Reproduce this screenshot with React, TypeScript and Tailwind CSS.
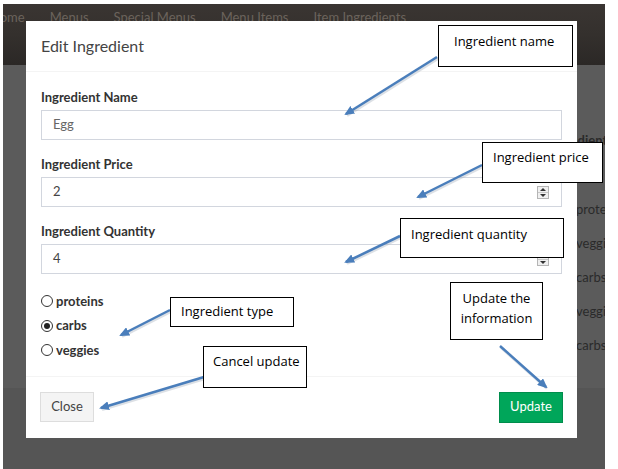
import React from "react";

type Callout = {
  text: string[];
  left: number;
  top: number;
  width: number;
  height: number;
  pl: string;
  pt: string;
  center?: boolean;
};

const callouts: Callout[] = [
  { text: ["Ingredient name"], left: 438, top: 25, width: 135, height: 42, pl: "pl-[15px]", pt: "pt-[5px]" },
  { text: ["Ingredient price"], left: 482, top: 142, width: 121, height: 41, pl: "pl-[10px]", pt: "pt-[4px]" },
  { text: ["Ingredient quantity"], left: 400, top: 218, width: 164, height: 40, pl: "pl-[10px]", pt: "pt-[5px]" },
  { text: ["Update the", "information"], left: 450, top: 282, width: 93, height: 58, pl: "pl-0", pt: "pt-[5px]", center: true },
  { text: ["Ingredient type"], left: 170, top: 297, width: 124, height: 30, pl: "pl-[10px]", pt: "pt-[3px]" },
  { text: ["Cancel update"], left: 203, top: 346, width: 104, height: 42, pl: "pl-[9px]", pt: "pt-[4px]" },
];

const arrows = [
  { x1: 437, y1: 57, x2: 346, y2: 114 },
  { x1: 482, y1: 165, x2: 418, y2: 197 },
  { x1: 400, y1: 236, x2: 346, y2: 262 },
  { x1: 170, y1: 310, x2: 121, y2: 335 },
  { x1: 204, y1: 377, x2: 101, y2: 408 },
  { x1: 500, y1: 346, x2: 546, y2: 387 },
];

const navItems = ["Home", "Menus", "Special Menus", "Menu Items", "Item Ingredients"];
const tableRows = ["proteins", "veggies", "carbs", "veggies", "carbs"];

function Spinner() {
  return (
    <div className="flex flex-col w-[12px] h-[13px] border border-[#b5b5b5] bg-[#f0f0f0]">
      <div className="flex-1 flex items-center justify-center border-b border-[#c8c8c8]">
        <div className="w-0 h-0 border-l-[3px] border-r-[3px] border-b-[3px] border-l-transparent border-r-transparent border-b-[#333]" />
      </div>
      <div className="flex-1 flex items-center justify-center">
        <div className="w-0 h-0 border-l-[3px] border-r-[3px] border-t-[3px] border-l-transparent border-r-transparent border-t-[#333]" />
      </div>
    </div>
  );
}

function Field({ label, value, spinner, muted }: { label: string; value: string; spinner?: boolean; muted?: boolean }) {
  return (
    <div className="mb-[15px]">
      <div className="h-[18px] leading-[18px] text-[13px] font-bold text-[#333] mb-[4px]">{label}</div>
      <div className="h-[30px] border border-[#d2d6de] flex items-center pl-[11px] pr-[12px]">
        <span className={`flex-1 text-[13px] ${muted ? "text-[#666]" : "text-[#444]"}`}>{value}</span>
        {spinner && <Spinner />}
      </div>
    </div>
  );
}

function Radio({ label, checked }: { label: string; checked?: boolean }) {
  return (
    <div className="h-[24.5px] flex items-center gap-[3px]">
      <div className="w-[12px] h-[12px] rounded-full border border-[#333] bg-white flex items-center justify-center">
        {checked && <div className="w-[6px] h-[6px] rounded-full bg-[#222]" />}
      </div>
      <span className="text-[13px] font-bold text-[#333]">{label}</span>
    </div>
  );
}

export default function App() {
  return (
    <div className="relative w-[618px] h-[469px] bg-white pt-[4px] pl-[3px] pr-[13px] overflow-hidden font-['Lato',sans-serif]">
      {/* page behind the overlay */}
      <div className="h-full flex flex-col bg-[#555] overflow-hidden">
        <div className="h-[61px] bg-[linear-gradient(180deg,#3a3532_0%,#34302d_50%,#2b2826_100%)]">
          <div className="flex gap-[25px] h-[28px] items-center -ml-[13px] text-[13px] text-[#6b635c]">
            {navItems.map((n) => (
              <span key={n}>{n}</span>
            ))}
          </div>
        </div>
        <div className="h-[323px] bg-[#5b5b5b] pl-[545px] pt-[66px] text-[13px] text-[#2a2a2a] whitespace-nowrap">
          <div className="h-[18px] leading-[18px] font-bold">Ingredients</div>
          <div className="mt-[43px] w-[100px] pl-[24px]">
            {tableRows.map((r, i) => (
              <div key={i} className="h-[34px] leading-[34px] pl-[4px]">
                {r}
              </div>
            ))}
          </div>
        </div>
        <div className="flex-1 bg-[#555]" />
      </div>

      {/* modal */}
      <div className="absolute left-[26px] top-[21px] w-[551px] bg-white">
        <div className="h-[51px] flex items-center px-[15px] border-b border-[#f4f4f4]">
          <span className="text-[16px] text-[#444]">Edit Ingredient</span>
        </div>
        <div className="px-[15px] pt-[16px] pb-[13px]">
          <Field label="Ingredient Name" value="Egg" muted />
          <Field label="Ingredient Price" value="2" spinner />
          <Field label="Ingredient Quantity" value="4" spinner />
          <div>
            <Radio label="proteins" />
            <Radio label="carbs" checked />
            <Radio label="veggies" />
          </div>
        </div>
        <div className="flex justify-between items-center px-[14px] pt-[15px] pb-[15px] border-t border-[#f4f4f4]">
          <button className="w-[54px] h-[30px] bg-[#f4f4f4] border border-[#ddd] text-[13px] text-[#444]">Close</button>
          <button className="w-[64px] h-[31px] bg-[#00a65a] border border-[#008d4c] text-[13px] text-white">Update</button>
        </div>
      </div>

      {/* annotation arrows */}
      <svg className="absolute inset-0 pointer-events-none" width="618" height="469">
        <defs>
          <marker id="ah" markerWidth="10" markerHeight="9" refX="8" refY="4.5" orient="auto" markerUnits="userSpaceOnUse">
            <path d="M0,0 L10,4.5 L0,9 z" fill="#4a7ebb" />
          </marker>
        </defs>
        {arrows.map((a, i) => (
          <g key={i}>
            <line x1={a.x1 + 1} y1={a.y1 + 1.5} x2={a.x2 + 1} y2={a.y2 + 1.5} stroke="#9aa6b4" strokeOpacity="0.35" strokeWidth="3" />
            <line x1={a.x1} y1={a.y1} x2={a.x2} y2={a.y2} stroke="#4a7ebb" strokeWidth="2.5" markerEnd="url(#ah)" />
          </g>
        ))}
      </svg>

      {/* callout boxes */}
      {callouts.map((c, i) => (
        <div
          key={i}
          className={`absolute bg-white border border-black text-[13px] leading-[20px] text-black font-['Open_Sans',sans-serif] ${c.pl} ${c.pt} ${c.center ? "text-center" : ""}`}
          style={{ left: c.left, top: c.top, width: c.width, height: c.height }}
        >
          {c.text.map((t) => (
            <div key={t}>{t}</div>
          ))}
        </div>
      ))}
    </div>
  );
}
